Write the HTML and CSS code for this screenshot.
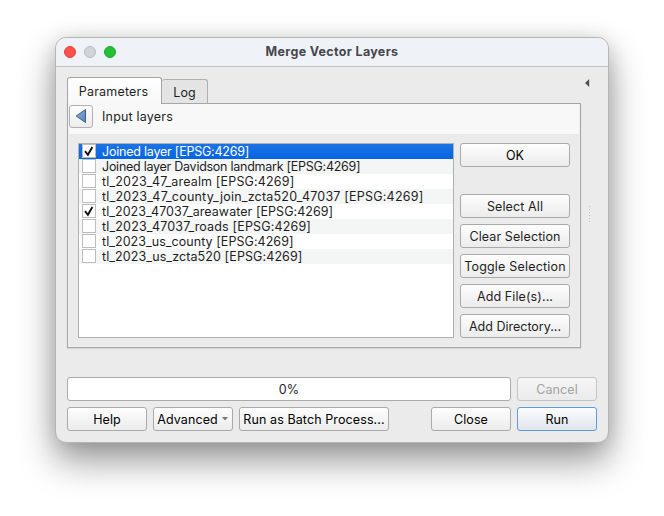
FILE: index.html
```
<!DOCTYPE html>
<html lang="en">
<head>
<meta charset="utf-8">
<title>Merge Vector Layers</title>
<link rel="stylesheet" href="styles.css">
</head>
<body>
<main class="window">
  <header class="titlebar">
    <div class="lights"><i class="red"></i><i class="grey"></i><i class="green"></i></div>
    <h1>Merge Vector Layers</h1>
  </header>
  <div class="content">
    <div class="upper">
      <section class="tabs">
        <nav class="tabbar"><span class="tab active">Parameters</span><span class="tab log">Log</span></nav>
        <div class="panel">
          <div class="crumb">
            <button class="back" aria-label="Back"><svg width="12" height="16" viewBox="0 0 12 16"><defs><linearGradient id="b" x1="0" y1="0" x2="1" y2="1"><stop offset="0" stop-color="#8fb4da"/><stop offset="1" stop-color="#4f83ba"/></linearGradient></defs><path d="M10.5 1.5V14.5L1.2 8Z" fill="url(#b)" stroke="#3c5f88" stroke-width="1"/></svg></button>
            <span>Input layers</span>
          </div>
          <div class="body">
            <ul class="list">
              <li class="selected"><i class="box"><svg width="14" height="14" viewBox="0 0 14 14"><path d="M3 7.2L5.9 10.8L10.4 3"/></svg></i><span class="tight">Joined layer [EPSG:4269]</span></li>
              <li><i class="box"></i><span class="tighter">Joined layer Davidson landmark [EPSG:4269]</span></li>
              <li><i class="box"></i><span class="normal">tl_2023_47_arealm [EPSG:4269]</span></li>
              <li><i class="box"></i><span class="loose">tl_2023_47_county_join_zcta520_47037 [EPSG:4269]</span></li>
              <li><i class="box"><svg width="14" height="14" viewBox="0 0 14 14"><path d="M3 7.2L5.9 10.8L10.4 3"/></svg></i><span class="snug">tl_2023_47037_areawater [EPSG:4269]</span></li>
              <li><i class="box"></i><span class="normal">tl_2023_47037_roads [EPSG:4269]</span></li>
              <li><i class="box"></i><span class="snug">tl_2023_us_county [EPSG:4269]</span></li>
              <li><i class="box"></i><span>tl_2023_us_zcta520 [EPSG:4269]</span></li>
            </ul>
            <div class="actions">
              <button class="btn ok">OK</button>
              <button class="btn">Select All</button>
              <button class="btn">Clear Selection</button>
              <button class="btn toggle">Toggle Selection</button>
              <button class="btn">Add File(s)...</button>
              <button class="btn directory">Add Directory...</button>
            </div>
          </div>
        </div>
      </section>
      <aside class="side">
        <svg class="collapse" width="5" height="8" viewBox="0 0 5 8"><path d="M4.2 0V8L0 4Z" fill="#505050"/></svg>
        <div class="grip"></div>
      </aside>
    </div>
    <div class="row progress-row"><div class="progress">0%</div><button class="btn cancel" disabled>Cancel</button></div>
    <div class="row">
      <button class="btn">Help</button>
      <button class="btn advanced">Advanced<svg width="6" height="4" viewBox="0 0 6 4"><path d="M0 0H6L3 3.5Z" fill="#777"/></svg></button>
      <button class="btn batch">Run as Batch Process...</button>
      <button class="btn close">Close</button>
      <button class="btn run">Run</button>
    </div>
  </div>
</main>
</body>
</html>
```
FILE: styles.css
```
* { box-sizing: border-box; }
body { margin: 0; padding: 37px 0 0 55px; width: 664px; height: 516px; overflow: hidden; background: #fff; font: 12.5px/15px Inter, "Liberation Sans", sans-serif; color: #1e1e1e; letter-spacing: 0.1px; }
button { font: inherit; color: inherit; letter-spacing: inherit; padding: 0; margin: 0; }
svg { display: block; flex: none; }
.window { width: 554px; height: 406px; border: 1px solid #b5b5b6; border-radius: 11px; background: #ebebeb; box-shadow: 0 18px 36px rgba(0,0,0,.4), 0 2px 20px rgba(0,0,0,.12); }
.titlebar { position: relative; height: 29px; display: flex; align-items: center; justify-content: center; background: #eff3f8; border-bottom: 1px solid #bfc1c4; border-radius: 10px 10px 0 0; }
.lights { position: absolute; left: 8px; top: 8px; display: flex; gap: 8px; }
.lights i { width: 12px; height: 12px; border-radius: 50%; border: 1px solid; }
.lights .red { background: #ff5149; border-color: #e1443c; }
.lights .grey { background: #d1d4d9; border-color: #b8babe; }
.lights .green { background: #24c038; border-color: #1ca92c; }
h1 { margin: 0; font-size: 12.5px; line-height: 16px; font-weight: 700; color: #46474a; letter-spacing: 0.32px; }
.content { padding: 10px 11px 0; }
.upper { display: flex; height: 271px; }
.tabs { width: 514px; }
.tabbar { display: flex; align-items: flex-end; height: 27px; position: relative; z-index: 1; }
.tab { display: flex; justify-content: center; align-items: center; border: 1px solid #b0b0b0; border-radius: 3px 3px 0 0; }
.tab.active { width: 95px; height: 27px; background: linear-gradient(#fff, #f8f8f8); border-color: #a6a6a6; border-bottom: 0; padding: 0 2px 0 0; letter-spacing: 0.2px; }
.tab.log { width: 46px; height: 25px; border-left: 0; border-bottom-color: #a6a6a6; background: #e4e4e4; padding-top: 1px; }
.panel { height: 245px; margin-top: -1px; border: 1px solid #a6a6a6; box-shadow: 0 1px 1px #d7d7d7; padding: 0 1px 0 1px; background: #f0f0f0; }
.crumb { height: 30px; background: #f8f8f8; display: flex; align-items: flex-start; padding: 1px 0 0; gap: 9px; letter-spacing: 0.2px; }
.crumb span { padding-top: 4px; }
.back { width: 24px; height: 23px; border: 1px solid #b0b0b0; border-radius: 3px; background: linear-gradient(#fefefe, #ececec); display: flex; align-items: center; justify-content: center; padding-bottom: 1px; }
.body { height: 212px; background: #ebebeb; padding: 9px 9px 9px; display: flex; gap: 6px; }
.list { list-style: none; margin: 0; padding: 0; width: 376px; height: 195px; border: 1px solid #b0b0b0; background: #fff; }
.list li { height: 15px; display: flex; gap: 6px; padding-left: 3px; white-space: nowrap; }
.list li:nth-child(even) { background: #f4f5f5; }
.list .selected { background: linear-gradient(#1a74e6, #0764e1); color: #fff; }
.tight { letter-spacing: -0.22px; }
.tighter { letter-spacing: -0.26px; }
.normal { letter-spacing: 0.16px; }
.loose { letter-spacing: 0.21px; }
.snug { letter-spacing: 0.05px; }
.box { width: 14px; height: 14px; border: 1px solid #bdbdbd; background: #fff; flex: none; display: flex; align-items: center; justify-content: center; }
.box path { fill: none; stroke: #111; stroke-width: 1.9; }
.actions { width: 110px; display: flex; flex-direction: column; gap: 6px; }
.btn { width: 80px; height: 24px; flex: none; border: 1px solid #aaa; border-radius: 3px; background: linear-gradient(#fdfdfd, #ececec); display: flex; justify-content: center; align-items: center; white-space: nowrap; }
.actions .btn { width: 110px; }
.actions .toggle { letter-spacing: 0.2px; }
.actions .directory { letter-spacing: 0; }
.actions .ok { margin-bottom: 21px; color: #000; }
.side { width: 17px; padding: 2px 0 0 4px; }
.grip { width: 1px; height: 17px; margin: 119px 0 0 4px; background: repeating-linear-gradient(#bcbcbc 0 1px, transparent 1px 3px); }
.row { display: flex; gap: 6px; color: #000; }
.progress-row { margin: 29px 0 6px; }
.progress { width: 444px; height: 24px; border: 1px solid #aaa; border-radius: 3px; background: #fff; display: flex; align-items: center; justify-content: center; color: #1e1e1e; }
.cancel { color: #a2a2a2; border-color: #c4c4c4; background: linear-gradient(#f5f5f5, #ebebeb); }
.advanced { gap: 4px; padding-right: 1px; }
.btn.batch { width: 150px; }
.close { margin-left: 36px; }
.run { border-color: #5a9be4; background: linear-gradient(#fbfcfe, #e0e5ec); }
```
